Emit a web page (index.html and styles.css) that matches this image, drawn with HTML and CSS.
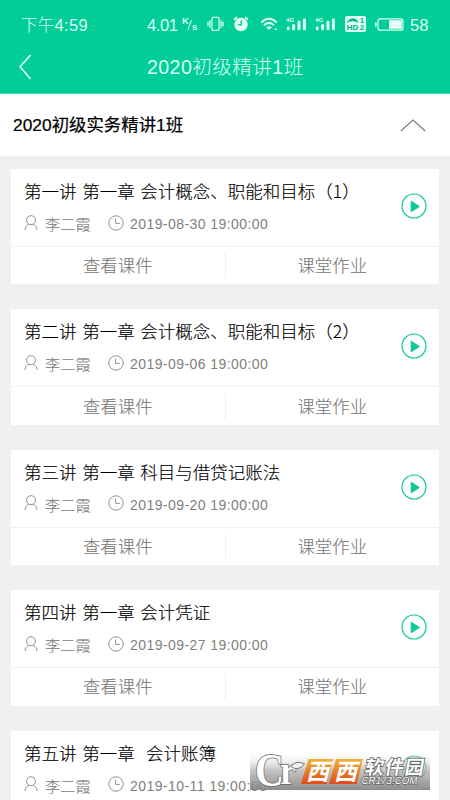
FILE: index.html
```
<!DOCTYPE html>
<html lang="zh-CN">
<head>
<meta charset="utf-8">
<title>2020初级精讲1班</title>
<link rel="stylesheet" href="styles.css">
</head>
<body>
<svg class="defs" aria-hidden="true">
  <symbol id="user" viewBox="0 0 14 16"><circle cx="7" cy="5.2" r="4.5"/><path d="M4.9 9.2C2.6 10.2 1.2 12.2 .9 15M9.1 9.2c2.3 1 3.7 3 4 5.8"/></symbol>
  <symbol id="clock" viewBox="0 0 16 16"><circle cx="8" cy="8" r="7.2"/><path d="M7.6 3.4v5h4.2"/></symbol>
  <symbol id="play" viewBox="0 0 26 26"><circle cx="13" cy="13" r="12"/><path d="M10.3 8.4v10l7.8-5z"/></symbol>
</svg>
<div class="screen">
  <header class="header">
    <div class="status">
      <span class="time">下午4:59</span>
      <span class="speed">4.01</span>
      <svg class="unit" viewBox="0 0 16 16"><text x="0" y="8">K</text><path d="M9.5 4L5.8 14"/><text x="10" y="14">s</text></svg>
      <svg class="vibrate" viewBox="0 0 18 16"><rect x="5.2" y="1" width="7.6" height="13.8" rx="1.5"/><path d="M1 5.5v5M3 4v8M15 4v8M17 5.5v5"/></svg>
      <svg class="alarm" viewBox="0 0 16 16"><circle cx="8" cy="8.5" r="6.7"/><path class="ears" d="M1 3.6L4 1.2M15 3.6l-3-2.4"/><path class="hands" d="M8.2 4.5v4.3H5.2"/></svg>
      <svg class="wifi" viewBox="0 0 18 16"><path d="M1.2 6.4Q9-1 16.8 6.4M3.9 9.2q5.1-4.6 10.2 0"/><path class="solid" d="M6.2 11.3q2.8-2 5.6 0L9 14z M14.2 14l1.5-2 1.5 2z"/></svg>
      <svg class="signal" viewBox="0 0 22 16"><text x="0" y="5.4">4G</text><path d="M2.2 10.8v1M7.6 8.4v3.4M13 5v6.8M18.4 2.8v9"/></svg>
      <svg class="signal" viewBox="0 0 22 16"><text x="0" y="5.4">4G</text><path d="M2.2 10.8v1M7.6 8.4v3.4M13 5v6.8M18.4 2.8v9"/></svg>
      <svg class="hd" viewBox="0 0 21 16"><rect width="21" height="16" rx="2"/><path d="M2.4 6.4Q7.8-.4 13.2 6.4M4.8 5.6Q7.8 3 10.8 5.6"/><text x="1.8" y="14.2">HD</text><text x="14.8" y="7.4">1</text><text x="14.8" y="14.2">2</text></svg>
      <svg class="battery" viewBox="0 0 29 13"><rect class="case" x="3" y=".8" width="25" height="11.4" rx="2.3"/><path d="M14 2.2h12.8v8.6H14zM0 4.5h1.6v4H0z"/></svg>
      <span class="percent">58</span>
    </div>
    <div class="navbar">
      <svg class="back" viewBox="0 0 13 26"><path d="M11.6 1L1 12.8 11.6 25"/></svg>
      <h1>2020初级精讲1班</h1>
    </div>
  </header>
  <section class="course">
    <h2>2020初级实务精讲1班</h2>
    <svg class="chevron" viewBox="0 0 26 13"><path d="M.8 12L13 1l12.2 11"/></svg>
  </section>
  <main class="lessons">
    <article class="card">
      <div class="info">
        <div class="details"><h3>第一讲 第一章 会计概念、职能和目标（1）</h3>
        <div class="meta"><svg class="user"><use href="#user"/></svg><span class="name">李二霞</span><svg class="clock"><use href="#clock"/></svg><time>2019-08-30 19:00:00</time></div></div>
        <svg class="play"><use href="#play"/></svg>
      </div>
      <div class="actions"><span>查看课件</span><span>课堂作业</span></div>
    </article>
    <article class="card">
      <div class="info">
        <div class="details"><h3>第二讲 第一章 会计概念、职能和目标（2）</h3>
        <div class="meta"><svg class="user"><use href="#user"/></svg><span class="name">李二霞</span><svg class="clock"><use href="#clock"/></svg><time>2019-09-06 19:00:00</time></div></div>
        <svg class="play"><use href="#play"/></svg>
      </div>
      <div class="actions"><span>查看课件</span><span>课堂作业</span></div>
    </article>
    <article class="card">
      <div class="info">
        <div class="details"><h3>第三讲 第一章 科目与借贷记账法</h3>
        <div class="meta"><svg class="user"><use href="#user"/></svg><span class="name">李二霞</span><svg class="clock"><use href="#clock"/></svg><time>2019-09-20 19:00:00</time></div></div>
        <svg class="play"><use href="#play"/></svg>
      </div>
      <div class="actions"><span>查看课件</span><span>课堂作业</span></div>
    </article>
    <article class="card">
      <div class="info">
        <div class="details"><h3>第四讲 第一章 会计凭证</h3>
        <div class="meta"><svg class="user"><use href="#user"/></svg><span class="name">李二霞</span><svg class="clock"><use href="#clock"/></svg><time>2019-09-27 19:00:00</time></div></div>
        <svg class="play"><use href="#play"/></svg>
      </div>
      <div class="actions"><span>查看课件</span><span>课堂作业</span></div>
    </article>
    <article class="card">
      <div class="info">
        <div class="details"><h3>第五讲 第一章  会计账簿</h3>
        <div class="meta"><svg class="user"><use href="#user"/></svg><span class="name">李二霞</span><svg class="clock"><use href="#clock"/></svg><time>2019-10-11 19:00:00</time></div></div>
        <svg class="play"><use href="#play"/></svg>
      </div>
    </article>
  </main>
  <svg class="watermark" viewBox="0 0 180 39">
    <defs>
      <linearGradient id="shade" x2="0" y2="1"><stop stop-color="#fff" stop-opacity="0"/><stop offset=".5" stop-color="#b4b4b4" stop-opacity=".8"/><stop offset="1" stop-color="#808080" stop-opacity=".9"/></linearGradient>
      <linearGradient id="orange" x2="0" y2="1"><stop stop-color="#f2b233"/><stop offset="1" stop-color="#e14a1c"/></linearGradient>
    </defs>
    <rect width="180" height="39" fill="url(#shade)"/>
    <text class="big" x="5" y="34.5" textLength="29" lengthAdjust="spacingAndGlyphs">C</text>
    <text class="small" x="30" y="33" textLength="16" lengthAdjust="spacingAndGlyphs">r</text>
    <path class="leaf" d="M41 15.5q5-7 13.5-2.5-6.500 8-13.500 2.500z"/>
    <path class="tile" d="M58.500 8h24.500l-6.500 25h-25.500zM86 8h27l-6.500 25h-27.500z"/>
    <g class="xixi"><text transform="translate(56 28.500) skewX(-14)">西</text><text transform="translate(84 28.500) skewX(-14)">西</text></g>
    <text class="soft" transform="translate(114 22.500) skewX(-10)" textLength="59">软件园</text>
    <text class="site" transform="translate(111 33) skewX(-10)" textLength="56" lengthAdjust="spacingAndGlyphs">CR173.COM</text>
  </svg>
</div>
</body>
</html>
```
FILE: styles.css
```
* { box-sizing: border-box; }
body { margin: 0; background: #f0f0f0; font-family: "Liberation Sans", "Noto Sans CJK SC", sans-serif; }
h1, h2, h3 { margin: 0; font-weight: 300; }
svg { display: block; flex: none; fill: none; }
.defs { position: absolute; width: 0; height: 0; }
.screen { position: relative; width: 450px; height: 800px; overflow: hidden; }

.header { height: 94px; background: #00cd98; color: #d9fff3; border-bottom: 1px solid #4cdcb6; }
.status { display: flex; height: 48px; padding: 0 0 0 21px; align-items: center; stroke: #dcfff4; font-weight: 300; }
.status span { line-height: 24px; white-space: nowrap; }
.time { width: 126px; font-size: 16.5px; letter-spacing: .3px; }
.speed { width: 35px; font-size: 16.5px; letter-spacing: -.4px; }
.unit { width: 16px; height: 16px; margin-right: 9px; }
.unit text { fill: #dcfff4; stroke: none; font-size: 9.5px; font-weight: bold; }
.vibrate { width: 17px; height: 16px; margin-right: 9px; stroke-width: 1.3; }
.alarm { width: 16px; height: 16px; margin-right: 11px; }
.alarm circle { fill: #dcfff4; stroke: none; }
.ears { stroke-width: 2; }
.hands { stroke: #00cd98; stroke-width: 1.4; }
.wifi { width: 18px; height: 16px; margin-right: 8px; stroke-width: 2; }
.wifi .solid { fill: #dcfff4; stroke: none; }
.signal { width: 22px; height: 16px; margin: 2px 7px 0 0; stroke-width: 3; stroke-linecap: round; }
.signal text { font-size: 6.2px; font-weight: bold; fill: #dcfff4; stroke: none; }
.hd { width: 21px; height: 16px; margin: 0 9px 0 1px; }
.hd rect { fill: #dcfff4; stroke: none; }
.hd path { stroke: #00b485; stroke-width: 1.3; }
.hd text { fill: #00b485; stroke: none; font-size: 8px; font-weight: bold; }
.battery { width: 29px; height: 13px; margin-right: 6px; }
.battery .case { stroke-width: 1.2; }
.battery path { fill: #eafff9; stroke: none; }
.percent { font-size: 16.5px; }
.status .percent, .status .speed, .status .time { padding-top: 2px; }

.navbar { display: flex; height: 37px; padding-left: 19px; align-items: center; }
.back { width: 13px; height: 26px; stroke: #e6fff8; stroke-width: 1.6; }
.navbar h1 { flex: 1; margin-left: 115px; font-size: 19.6px; line-height: 36px; white-space: nowrap; letter-spacing: .4px; }

.course { display: flex; height: 62px; padding: 0 24px 3px 13px; align-items: center; justify-content: space-between; background: #fff; }
.course h2 { font-size: 17.4px; color: #000; font-weight: 400; -webkit-text-stroke: .2px #000; }
.chevron { width: 26px; height: 13px; margin-top: 4px; stroke: #777; stroke-width: 1.1; }

.lessons { display: flex; flex-direction: column; gap: 25px; padding: 13px 11px 0; }
.card { height: 115.4px; flex: none; background: #fff; }
.info { display: flex; height: 77px; padding: 10px 12px 0 13px; justify-content: space-between; }
.card h3 { height: 27px; font-family: "Noto Sans CJK SC", sans-serif; font-size: 17.5px; line-height: 24px; color: #000; white-space: pre; word-spacing: 1.8px; -webkit-text-stroke: .15px #000; }
.meta { display: flex; height: 36px; align-items: center; color: #808080; }
.meta svg { stroke: #929292; stroke-width: 1; }
.user { width: 14px; height: 16px; margin-top: -3px; }
.name { width: 63px; margin: -2px 0 0 7px; font-size: 15.2px; font-weight: 300; white-space: nowrap; -webkit-text-stroke: .15px #808080; }
.clock { width: 16px; height: 16px; margin-top: -3px; }
.meta time { margin-left: 6px; font-size: 14px; letter-spacing: .43px; white-space: nowrap; }
.play { width: 26px; height: 26px; margin-top: 14px; stroke: #10c99a; stroke-width: 1.2; stroke-linejoin: round; }
#play path { fill: #10c99a; }
.actions { display: flex; height: 38.4px; border-top: 1.5px solid #f0f0f0; align-items: center; }
.actions span { flex: 1; height: 25px; font-size: 17.4px; line-height: 26px; text-align: center; color: #777; font-weight: 300; -webkit-text-stroke: .1px #777; }
.actions span + span { border-left: 1.5px solid #eee; }

.watermark { position: absolute; left: 250px; top: 751px; width: 180px; height: 39px; overflow: visible; }
.watermark text { fill: #fff; stroke: #666; stroke-width: 1.6; paint-order: stroke; font-weight: bold; }
.watermark .big { font-family: "Liberation Serif", serif; font-size: 46px; }
.watermark .small { font-family: "Liberation Serif", serif; font-size: 42px; }
.leaf { fill: #eee; stroke: #777; }
.tile { fill: url(#orange); }
.watermark .xixi text { font-size: 23px; stroke: none; }
.watermark .soft { font-size: 19px; }
.watermark .site { font-size: 10.5px; font-weight: 400; }
```
